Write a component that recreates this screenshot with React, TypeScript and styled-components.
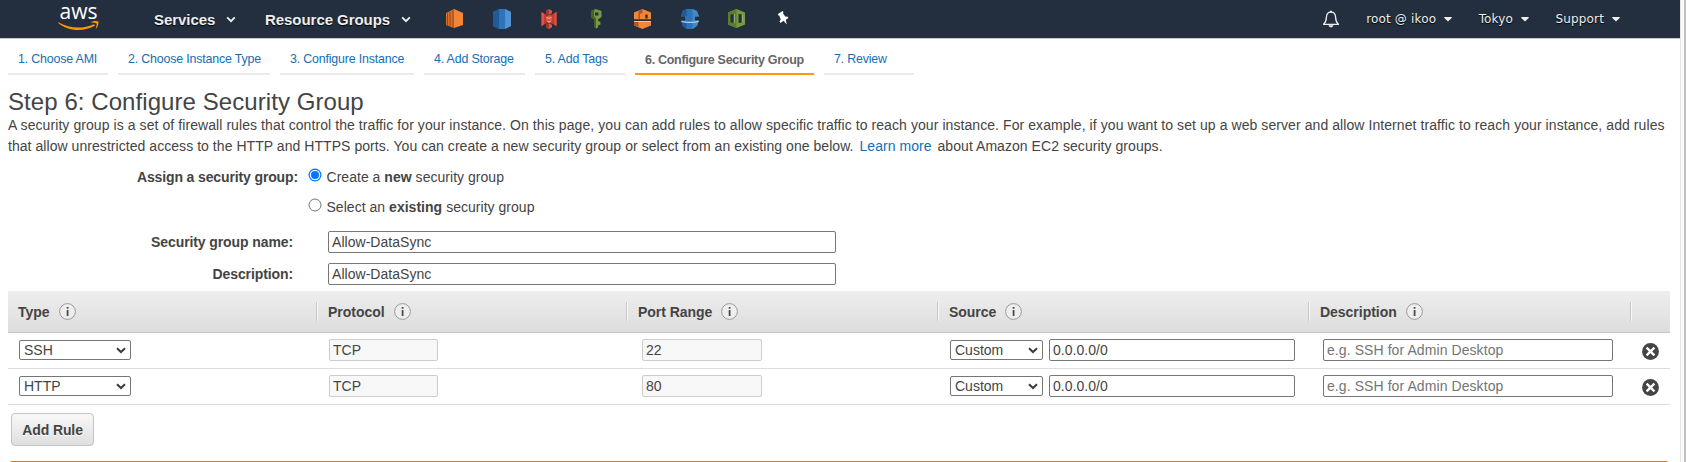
import React from "react";
import styled, { createGlobalStyle } from "styled-components";

const GlobalStyle = createGlobalStyle`
  *, *::before, *::after { box-sizing: border-box; }
  body {
    margin: 0;
    background: #fff;
    color: #444;
    font-family: "Liberation Sans", Arial, sans-serif;
    font-size: 14px;
    overflow: hidden;
  }
  input, select, button { font: inherit; color: inherit; margin: 0; }
`;

const Window = styled.div`
  display: flex;
  height: 462px;
  overflow: hidden;
`;
const Page = styled.div`
  width: 1680px;
  flex: none;
`;
const Scrollbar = styled.div`
  flex: 1;
  background: #fafafa;
  border-left: 1px solid #e4e4e4;
  border-right: 2px solid #c1c1c1;
`;

const TopBar = styled.header`
  height: 39px;
  display: flex;
  align-items: center;
  background: #232f3e;
  border-bottom: 1px solid #c9c9d0;
  padding: 0 60px 0 58px;
`;
const Logo = styled.svg`
  display: block;
  flex: none;
  overflow: visible;
`;
const MainMenu = styled.nav`
  display: flex;
  margin-left: 54px;
`;
const MainItem = styled.a<{ $w: number }>`
  display: flex;
  align-items: center;
  justify-content: space-between;
  width: ${(p) => p.$w}px;
  margin-right: 29px;
  color: #eee;
  font-weight: bold;
  font-size: 15px;
  letter-spacing: -0.05px;
  white-space: nowrap;
  text-shadow: 0 1px 1px #000;
`;
const Shortcuts = styled.div`
  display: flex;
  align-items: center;
  margin-left: 5px;
`;
const Shortcut = styled.svg`
  display: block;
  flex: none;
  width: 20px;
  height: 22px;
  margin-right: 27px;
`;
const Account = styled.div`
  display: flex;
  align-items: center;
  margin-left: auto;
`;
const AccountItem = styled.a<{ $gap: number }>`
  display: flex;
  align-items: center;
  gap: 8px;
  margin-left: ${(p) => p.$gap}px;
  color: #eee;
  font-family: "DejaVu Sans", Verdana, sans-serif;
  font-size: 12px;
  letter-spacing: 0.15px;
  text-shadow: 0 1px 1px #000;
`;

const Content = styled.main`
  padding: 0 10px 0 8px;
`;
const Steps = styled.ol`
  list-style: none;
  margin: 0;
  padding: 0;
  height: 36px;
  display: flex;
  gap: 10px;
`;
const Step = styled.li<{ $w: number; $active?: boolean }>`
  width: ${(p) => p.$w}px;
  padding: ${(p) => (p.$active ? "12px" : "11px")} 0 0 10px;
  font-size: ${(p) => (p.$active ? 12.5 : 12.4)}px;
  line-height: 18px;
  white-space: nowrap;
  letter-spacing: ${(p) => (p.$active ? -0.29 : -0.17)}px;
  color: ${(p) => (p.$active ? "#666" : "#146eb4")};
  font-weight: ${(p) => (p.$active ? "bold" : "normal")};
  border-bottom: 2px solid ${(p) => (p.$active ? "#ff9914" : "#eaeaea")};
`;
const Title = styled.h1`
  margin: 12px 0 0;
  font-size: 24px;
  font-weight: normal;
  line-height: 30px;
  letter-spacing: 0.07px;
`;
const Intro = styled.p`
  margin: -2px 0 0;
  line-height: 21px;
  white-space: nowrap;
`;
const IntroLine = styled.span<{ $ls: number }>`
  display: block;
  letter-spacing: ${(p) => p.$ls}px;
`;
const Link = styled.a`
  color: #146eb4;
  margin: 0 2px;
`;

const Radios = styled.div`
  display: flex;
  margin-top: 10px;
`;
const RadiosLabel = styled.div`
  width: 290px;
  text-align: right;
  font-weight: bold;
  line-height: 20px;
  letter-spacing: -0.13px;
`;
const RadioList = styled.div`
  display: flex;
  flex-direction: column;
  gap: 10px;
  margin-left: 10px;
`;
const RadioOption = styled.label`
  display: flex;
  line-height: 20px;
  white-space: pre;
  letter-spacing: 0.03px;
`;
const RadioDot = styled.svg`
  display: block;
  width: 14px;
  height: 14px;
  margin: 1px 5px 0 -0.5px;
`;
const Fields = styled.div`
  display: flex;
  flex-direction: column;
  gap: 10px;
  margin-top: 14px;
`;
const Field = styled.label`
  display: flex;
  align-items: center;
`;
const FieldLabel = styled.span`
  width: 285px;
  margin-right: 35px;
  text-align: right;
  font-weight: bold;
  letter-spacing: -0.1px;
`;
const TextInput = styled.input<{ $w: number }>`
  display: block;
  width: ${(p) => p.$w}px;
  height: 22px;
  padding: 0 3px;
  border: 1px solid #767676;
  border-radius: 2px;
  background: #fff;
  letter-spacing: 0.04px;
  outline: none;
  &:disabled {
    background: #f8f8f8;
    border-color: #ccc;
    color: #444;
  }
  &::placeholder { color: #757575; opacity: 1; letter-spacing: 0.08px; }
`;

const Table = styled.div`
  margin-top: 6px;
`;
const COLS = "308px 310px 311px 371px 322px 1fr";
const HeadRow = styled.div`
  display: grid;
  grid-template-columns: ${COLS};
  align-items: center;
  height: 42px;
  background: linear-gradient(#eee, #ddd);
  border-bottom: 1px solid #c4c4c4;
`;
const HeadCell = styled.div<{ $first?: boolean }>`
  display: flex;
  align-items: center;
  gap: 9px;
  height: 19px;
  padding-left: ${(p) => (p.$first ? 10 : 11)}px;
  border-left: ${(p) => (p.$first ? "0" : "1px solid #c8c8c8")};
  box-shadow: ${(p) => (p.$first ? "none" : "inset 1px 0 #f6f6f6")};
  font-weight: bold;
  letter-spacing: -0.03px;
  white-space: nowrap;
`;
const Row = styled.div`
  display: grid;
  grid-template-columns: ${COLS};
  align-items: start;
  height: 36px;
  padding-top: 6px;
  border-bottom: 1px solid #ddd;
`;
const Cell = styled.div<{ $pad: number }>`
  display: flex;
  align-items: center;
  gap: 6px;
  height: 22px;
  padding-left: ${(p) => p.$pad}px;
`;
const SelectBox = styled.div<{ $w: number }>`
  display: grid;
  grid-template-columns: 1fr 14px;
  align-items: center;
  width: ${(p) => p.$w}px;
  height: 20px;
  border: 1px solid #767676;
  border-radius: 2px;
  background: #fff;
`;
const Select = styled.select`
  appearance: none;
  grid-row: 1;
  grid-column: 1;
  min-width: 0;
  height: 18px;
  border: 0;
  padding: 0 0 0 4px;
  background: transparent;
  outline: none;
  line-height: 18px;
`;
const RemoveIcon = styled.svg`
  display: block;
  margin-top: 3px;
`;
const AddButton = styled.button`
  display: block;
  width: 83px;
  height: 33px;
  margin: 8px 0 0 3px;
  padding: 0;
  border: 1px solid #c4c4c4;
  border-radius: 4px;
  background: linear-gradient(#f8f8f8, #dfdfdf);
  font-weight: bold;
  letter-spacing: -0.1px;
  text-shadow: 0 1px 0 #fff;
`;
const Warning = styled.div`
  height: 60px;
  margin-top: 15px;
  border: 1px solid #e47911;
  border-radius: 4px;
`;

const MenuArrow = () => (
  <svg width="10" height="7" viewBox="0 0 10 7">
    <path d="M1.2 1.4 5 5.2 8.8 1.4" fill="none" stroke="#eee" strokeWidth="1.9" />
  </svg>
);
const Caret = () => (
  <svg width="8" height="6" viewBox="0 0 8 6">
    <path d="M.3 1h7.4v1L4 5.4.3 2Z" fill="#eee" />
  </svg>
);
const SelectArrow = () => (
  <svg width="10" height="7" viewBox="0 0 10 7">
    <path d="M1 1.2 5 5 9 1.2" fill="none" stroke="#3c3c3c" strokeWidth="2" />
  </svg>
);
const Info = () => (
  <svg width="17" height="17" viewBox="0 0 17 17">
    <circle cx="8.5" cy="8.5" r="7.9" fill="#eee" stroke="#999" strokeWidth="1" />
    <path d="M7.7 4h1.8v1.7H7.7zM7.7 7h1.8v6H7.7z" fill="#4a4a4a" />
  </svg>
);
const Remove = () => (
  <RemoveIcon width="17" height="17" viewBox="0 0 17 17">
    <circle cx="8.5" cy="8.5" r="8.4" fill="#444" />
    <path d="M4.6 4.6 12.4 12.4M12.4 4.6 4.6 12.4" stroke="#fff" strokeWidth="2.3" />
  </RemoveIcon>
);
const Bell = () => (
  <svg width="18" height="18" viewBox="0 0 18 18">
    <path
      d="M1.6 14.3c2-1.8 2.7-3.6 2.8-7C4.5 4.5 6.2 2.2 9 2.2s4.5 2.3 4.6 5.1c.1 3.4.8 5.2 2.8 7Z"
      fill="none"
      stroke="#eee"
      strokeWidth="1.3"
      strokeLinejoin="round"
    />
    <path d="M8 .8h2v1.400H8zM6.5 15.2h5c-.4 1.5-1.3 2-2.5 2s-2.1-.5-2.5-2Z" fill="#eee" />
  </svg>
);

const HeadInfo = ({ label, first }: { label: string; first?: boolean }) => (
  <HeadCell $first={first}>
    {label}
    <Info />
  </HeadCell>
);

const Picker = ({ w, value }: { w: number; value: string }) => (
  <SelectBox $w={w}>
    <Select defaultValue={value}>
      <option>{value}</option>
    </Select>
    <SelectArrow />
  </SelectBox>
);

const rules = [
  { type: "SSH", port: "22" },
  { type: "HTTP", port: "80" },
];

export default function App() {
  return (
    <Window>
      <GlobalStyle />
      <Page>
        <TopBar>
          <Logo width="42" height="38" viewBox="0 0 42 38">
            <text
              x="1.5"
              y="18.5"
              fill="#fff"
              fontFamily="Open Sans, Noto Sans, sans-serif"
              fontSize="22.5"
              textLength="38"
              lengthAdjust="spacingAndGlyphs"
            >
              aws
            </text>
            <path d="M.4 22.2c10.500 6.200 24 7.200 35.500 2l1.200 1.300C26 32 10 31.500.2 22.900Z" fill="#f90" />
            <path d="M32.600 22.600c2.600-1.800 6.200-1.900 7.800-1 .4 2.200-.5 5.300-2.700 7.400.4-2 1.400-4.300.9-5.400-.8-1-3.800-.8-6-1Z" fill="#f90" />
          </Logo>
          <MainMenu>
            <MainItem $w={82}>Services<MenuArrow /></MainItem>
            <MainItem $w={146}>Resource Groups<MenuArrow /></MainItem>
          </MainMenu>
          <Shortcuts>
            <Shortcut viewBox="0 0 20 22">
              <path d="M9 1 18 5v12l-9 3Z" fill="#f58536" />
              <path d="M9 1 1 5v12l8 3Z" fill="#d86f2a" />
              <path d="M2.500 4.500v13M5 3.500v15M8 2v18" stroke="#8f4a22" strokeWidth="1" />
            </Shortcut>
            <Shortcut viewBox="0 0 20 22">
              <path d="M1 4 7 1h6l6 3v14l-6 3H7l-6-3Z" fill="#2e73b8" />
              <path d="M1 4 7 1v20l-6-3Z" fill="#205b98" />
              <path d="M13 1 19 4v14l-6 3Z" fill="#5294cf" />
            </Shortcut>
            <Shortcut viewBox="0 0 20 22">
              <path d="M2.500 4 7 6.500h6L17.500 4v14L13 15.500H7L2.500 18Z" fill="#c63b31" />
              <path d="M2.500 4 5 5.400v11.200L2.500 18ZM15.500 5.100l2-1.100v14l-2-1.100Z" fill="#e05243" />
              <path d="M7 6.500h2v9H7z" fill="#8c3123" />
              <path d="m10 1 3 1.700v2.600L10 6.500 7 5.300V2.700ZM10 7.500l3 1v4.500l-3 1.500-3-1.500V8.500ZM10 15.500l3 1.200v2.600L10 21l-3-1.700v-2.600Z" fill="#e05243" />
              <path d="M10 1 7 2.700v2.600l3 1.200ZM10 15.500l-3 1.200v2.600L10 21Z" fill="#a3372b" />
              <path d="m7.500 9.600 2.500.6 2.500-.6M8 13.400l2 .7 2-.7" fill="none" stroke="#f4b5a9" strokeWidth=".9" />
            </Shortcut>
            <Shortcut viewBox="0 0 20 22">
              <path d="M9.500 1 5 3v6l3 2.500V18l2 2.500 2-1v-2l2.500-1V14L12 12.800v-1.300L15.500 9V3Z" fill="#759c3e" />
              <path d="M9.500 1 5 3v6l3 2.500V18l2 2.500V10.500L8 8.500v-5Z" fill="#4b612c" />
              <path d="M9 4.500h3.500v3H9z" fill="#232f3e" />
            </Shortcut>
            <Shortcut viewBox="0 0 20 22">
              <path d="M9.500 1 18 4.500v7H1v-7ZM1 13h17v4.500L9.500 21 1 17.500Z" fill="#f58536" />
              <path d="M5.500 2.700 9.500 1v4L7 6v5.500H5.500ZM1 13l4.500 1v5.300L1 17.500Z" fill="#a8582a" />
              <path d="M12.300 6.500h2.400v4h-2.400zM1 11.500h17v1.300H1z" fill="#30323a" />
              <path d="M1 13h17v1H1z" fill="#fbbf93" />
            </Shortcut>
            <Shortcut viewBox="0 0 20 22">
              <path d="m6.500 1-4 2L1 8.500h4v4H1L2.500 18l4 3h6l4.500-3 2-5.500h-4v-4h4L17 3l-4.500-2Z" fill="#2e73b8" />
              <path d="m6.500 1-4 2L1 8.500h6ZM6.500 21v-6L1 12.500 2.500 18Z" fill="#205b98" />
              <path d="M12.500 1v20l4.500-3 2-5.500h-4v-4h4L17 3Z" fill="#4587c5" />
              <path d="M1.500 13.300C5 14.800 15 14.800 18.500 13.300" fill="none" stroke="#b7d2eb" strokeWidth="1.200" />
            </Shortcut>
            <Shortcut viewBox="0 0 20 22">
              <path d="M9.500 1 1 4.500v12L9.500 20 18 16.500v-12Z" fill="#759c3e" />
              <path d="M9.500 1 1 4.500v12L9.500 20Z" fill="#5a7e2e" />
              <path d="M3.500 6.500 7.500 6v9l-4-.7ZM11.500 6l4 .5v7.800l-4 .7Z" fill="#25323b" />
              <path d="M7.300 6v9M15.300 6.500v7.800" stroke="#b7ca9d" strokeWidth=".9" />
            </Shortcut>
            <Shortcut viewBox="0 0 20 22">
              <path d="m4 6 4.600-3 .9 1.300-.5 1.200 2.500 3.200 1.800-.3 1.200 1.500-2.700 1.800 1 4.800-3.200-3.700-3.200 2.200-.9-1.400 1.200-2L5.300 7.600l-1-.1Z" fill="#fff" />
            </Shortcut>
          </Shortcuts>
          <Account>
            <Bell />
            <AccountItem $gap={26.5}>root @ ikoo<Caret /></AccountItem>
            <AccountItem $gap={26.5}>Tokyo<Caret /></AccountItem>
            <AccountItem $gap={26.5}>Support<Caret /></AccountItem>
          </Account>
        </TopBar>
        <Content>
          <Steps>
            <Step $w={100}>1. Choose AMI</Step>
            <Step $w={152}>2. Choose Instance Type</Step>
            <Step $w={134}>3. Configure Instance</Step>
            <Step $w={101}>4. Add Storage</Step>
            <Step $w={90}>5. Add Tags</Step>
            <Step $w={179} $active>6. Configure Security Group</Step>
            <Step $w={90}>7. Review</Step>
          </Steps>
          <Title>Step 6: Configure Security Group</Title>
          <Intro>
            <IntroLine $ls={0.075}>
              A security group is a set of firewall rules that control the traffic for your instance. On this page, you can add rules to allow specific traffic to reach your instance. For example, if you want to set up a web server and allow Internet traffic to reach your instance, add rules
            </IntroLine>
            <IntroLine $ls={0.052}>
              that allow unrestricted access to the HTTP and HTTPS ports. You can create a new security group or select from an existing one below. <Link>Learn more</Link> about Amazon EC2 security groups.
            </IntroLine>
          </Intro>
          <Radios>
            <RadiosLabel>Assign a security group:</RadiosLabel>
            <RadioList>
              <RadioOption>
                <RadioDot viewBox="0 0 14 14">
                  <circle cx="7" cy="7" r="5.9" fill="#fff" stroke="#0075ff" strokeWidth="1.2" />
                  <circle cx="7" cy="7" r="4" fill="#0075ff" />
                </RadioDot>
                <span>Create a <b>new</b> security group</span>
              </RadioOption>
              <RadioOption>
                <RadioDot viewBox="0 0 14 14">
                  <circle cx="7" cy="7" r="6" fill="#fff" stroke="#767676" />
                </RadioDot>
                <span>Select an <b>existing</b> security group</span>
              </RadioOption>
            </RadioList>
          </Radios>
          <Fields>
            <Field>
              <FieldLabel>Security group name:</FieldLabel>
              <TextInput $w={508} defaultValue="Allow-DataSync" />
            </Field>
            <Field>
              <FieldLabel>Description:</FieldLabel>
              <TextInput $w={508} defaultValue="Allow-DataSync" />
            </Field>
          </Fields>
          <Table>
            <HeadRow>
              <HeadInfo label="Type" first />
              <HeadInfo label="Protocol" />
              <HeadInfo label="Port Range" />
              <HeadInfo label="Source" />
              <HeadInfo label="Description" />
              <HeadCell />
            </HeadRow>
            {rules.map((r) => (
              <Row key={r.type}>
                <Cell $pad={11}><Picker w={112} value={r.type} /></Cell>
                <Cell $pad={13}><TextInput $w={109} defaultValue="TCP" disabled /></Cell>
                <Cell $pad={16}><TextInput $w={120} defaultValue={r.port} disabled /></Cell>
                <Cell $pad={13}>
                  <Picker w={93} value="Custom" />
                  <TextInput $w={246} defaultValue="0.0.0.0/0" />
                </Cell>
                <Cell $pad={15}><TextInput $w={290} placeholder="e.g. SSH for Admin Desktop" /></Cell>
                <Cell $pad={12}><Remove /></Cell>
              </Row>
            ))}
          </Table>
          <AddButton>Add Rule</AddButton>
          <Warning />
        </Content>
      </Page>
      <Scrollbar />
    </Window>
  );
}
